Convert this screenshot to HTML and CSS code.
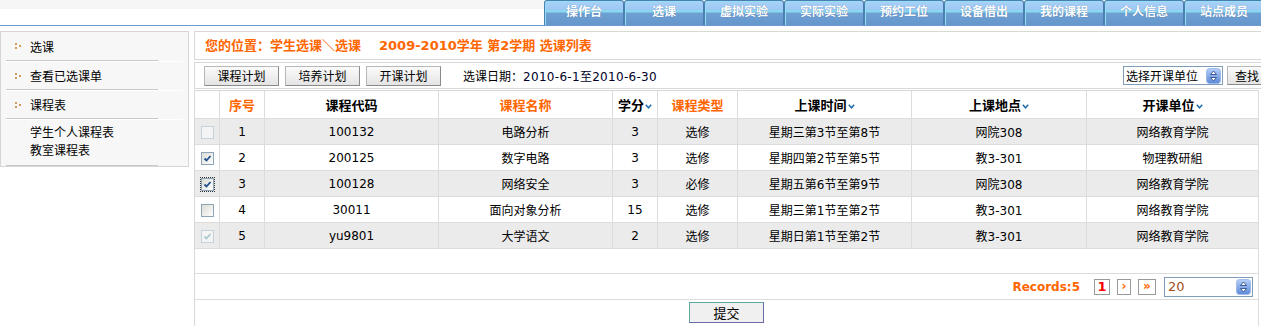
FILE: index.html
```html
<!DOCTYPE html>
<html lang="zh-CN">
<head>
<meta charset="utf-8">
<title>学生选课</title>
<link rel="stylesheet" href="styles.css">
</head>
<body>
<header class="top">
  <div class="brand"></div>
  <nav class="tabs">
    <a class="tab">操作台</a>
    <a class="tab">选课</a>
    <a class="tab">虚拟实验</a>
    <a class="tab">实际实验</a>
    <a class="tab">预约工位</a>
    <a class="tab">设备借出</a>
    <a class="tab">我的课程</a>
    <a class="tab">个人信息</a>
    <a class="tab">站点成员</a>
  </nav>
</header>

<div class="page">
  <aside class="side">
    <div class="item item-first"><svg class="dots" width="6" height="6" viewBox="0 0 6 6"><rect x="0" y="0" width="2" height="2"/><rect x="0" y="4" width="2" height="2"/><rect x="4" y="2" width="2" height="2"/></svg>选课</div>
    <div class="rule"></div>
    <div class="item"><svg class="dots" width="6" height="6" viewBox="0 0 6 6"><rect x="0" y="0" width="2" height="2"/><rect x="0" y="4" width="2" height="2"/><rect x="4" y="2" width="2" height="2"/></svg>查看已选课单</div>
    <div class="rule"></div>
    <div class="item"><svg class="dots" width="6" height="6" viewBox="0 0 6 6"><rect x="0" y="0" width="2" height="2"/><rect x="0" y="4" width="2" height="2"/><rect x="4" y="2" width="2" height="2"/></svg>课程表</div>
    <div class="rule"></div>
    <div class="sub">
      <div>学生个人课程表</div>
      <div>教室课程表</div>
    </div>
    <div class="rule rule-last"></div>
  </aside>

  <main class="main">
    <div class="crumb">您的位置：学生选课＼选课<span class="term">2009-2010学年 第2学期 选课列表</span></div>

    <div class="toolbar">
      <button class="btn">课程计划</button>
      <button class="btn">培养计划</button>
      <button class="btn">开课计划</button>
      <span class="date">选课日期：<span class="date-val">2010-6-1至2010-6-30</span></span>
      <div class="tools">
        <div class="sel sel-unit"><span>选择开课单位</span>
          <svg class="spin" width="15" height="16" viewBox="0 0 15 16"><defs><linearGradient id="sg1" x1="0" y1="0" x2="0" y2="1"><stop offset="0" stop-color="#b4cff8"/><stop offset="1" stop-color="#5d89d8"/></linearGradient></defs><rect x="0.5" y="0.5" width="14" height="15" rx="3" fill="url(#sg1)" stroke="#9fbbea"/><path d="M4.5 6.5 L7.5 3 L10.5 6.5 Z M4.5 9.5 L7.5 13 L10.5 9.5 Z" fill="#fff" stroke="#2f4f8c" stroke-width="0.9"/></svg>
        </div>
        <button class="btn btn-find">查找</button>
      </div>
    </div>

    <table class="grid">
      <colgroup>
        <col class="c-chk"><col class="c-no"><col class="c-code"><col class="c-name"><col class="c-credit"><col class="c-type"><col class="c-time"><col class="c-place"><col class="c-unit">
      </colgroup>
      <thead>
        <tr>
          <th></th>
          <th class="hl">序号</th>
          <th>课程代码</th>
          <th class="hl">课程名称</th>
          <th>学分<svg class="chev" width="7" height="5" viewBox="0 0 7 5"><polyline points="0.8,0.8 3.5,3.8 6.2,0.8"/></svg></th>
          <th class="hl">课程类型</th>
          <th>上课时间<svg class="chev" width="7" height="5" viewBox="0 0 7 5"><polyline points="0.8,0.8 3.5,3.8 6.2,0.8"/></svg></th>
          <th>上课地点<svg class="chev" width="7" height="5" viewBox="0 0 7 5"><polyline points="0.8,0.8 3.5,3.8 6.2,0.8"/></svg></th>
          <th>开课单位<svg class="chev" width="7" height="5" viewBox="0 0 7 5"><polyline points="0.8,0.8 3.5,3.8 6.2,0.8"/></svg></th>
        </tr>
      </thead>
      <tbody>
        <tr class="odd">
          <td><span class="cb cb-dis"></span></td>
          <td>1</td><td>100132</td><td>电路分析</td><td>3</td><td>选修</td><td>星期三第3节至第8节</td><td>网院308</td><td>网络教育学院</td>
        </tr>
        <tr>
          <td><span class="cb"><svg width="11" height="11" viewBox="0 0 11 11"><path class="ck" d="M2.5 5.5 L4.5 7.5 L8.5 3"/></svg></span></td>
          <td>2</td><td>200125</td><td>数字电路</td><td>3</td><td>选修</td><td>星期四第2节至第5节</td><td>教3-301</td><td>物理教研組</td>
        </tr>
        <tr class="odd">
          <td><span class="cb cb-focus"><svg width="11" height="11" viewBox="0 0 11 11"><path class="ck" d="M2.5 5.5 L4.5 7.5 L8.5 3"/></svg></span></td>
          <td>3</td><td>100128</td><td>网络安全</td><td>3</td><td>必修</td><td>星期五第6节至第9节</td><td>网院308</td><td>网络教育学院</td>
        </tr>
        <tr>
          <td><span class="cb"></span></td>
          <td>4</td><td>30011</td><td>面向对象分析</td><td>15</td><td>选修</td><td>星期三第1节至第2节</td><td>教3-301</td><td>网络教育学院</td>
        </tr>
        <tr class="odd">
          <td><span class="cb cb-dis"><svg width="11" height="11" viewBox="0 0 11 11"><path class="ck ck-dis" d="M2.5 5.5 L4.5 7.5 L8.5 3"/></svg></span></td>
          <td>5</td><td>yu9801</td><td>大学语文</td><td>2</td><td>选修</td><td>星期日第1节至第2节</td><td>教3-301</td><td>网络教育学院</td>
        </tr>
      </tbody>
      <tfoot>
        <tr class="blank"><td colspan="9"></td></tr>
        <tr class="pager-row">
          <td colspan="9">
            <div class="pager">
              <span class="rec">Records:5</span>
              <span class="pg pg-cur">1</span>
              <span class="pg pg-next">›</span>
              <span class="pg pg-last">»</span>
              <div class="sel sel-size"><span>20</span>
                <svg class="spin" width="15" height="16" viewBox="0 0 15 16"><defs><linearGradient id="sg2" x1="0" y1="0" x2="0" y2="1"><stop offset="0" stop-color="#b4cff8"/><stop offset="1" stop-color="#5d89d8"/></linearGradient></defs><rect x="0.5" y="0.5" width="14" height="15" rx="3" fill="url(#sg2)" stroke="#9fbbea"/><path d="M4.5 6.5 L7.5 3 L10.5 6.5 Z M4.5 9.5 L7.5 13 L10.5 9.5 Z" fill="#fff" stroke="#2f4f8c" stroke-width="0.9"/></svg>
              </div>
            </div>
          </td>
        </tr>
        <tr class="submit-row">
          <td colspan="9"><button class="submit">提交</button></td>
        </tr>
      </tfoot>
    </table>
  </main>
</div>
</body>
</html>
```

FILE: styles.css
```css
* { box-sizing: border-box; }
html, body { margin: 0; overflow: hidden; }
body {
  width: 1300px;
  font: 12px "DejaVu Sans", "Noto Sans CJK SC", sans-serif;
  color: #000;
  background: #fff;
}

/* ---------- top navigation ---------- */
.top {
  display: flex;
  height: 26px;
  border-bottom: 1px solid #6c9bd0;
  background: linear-gradient(#f6f6f6 0, #f6f6f6 9px, #fff 9px);
}
.brand { flex: 0 0 544px; }
.tabs { display: flex; }
.tab {
  flex: 0 0 80px;
  height: 25px;
  border: 1px solid #4f7db2;
  border-bottom: 0;
  border-radius: 3px 3px 0 0;
  background: linear-gradient(#a9d1f8 0, #9bc8f3 9px, #86dcee 10px, #86dcee 11px, #6fa0d4 12px, #6697cc 100%);
  box-shadow: inset 1px 1px 0 #8fe2f2;
  color: #fff;
  font-weight: bold;
  font-size: 12px;
  line-height: 22px;
  text-align: center;
  text-decoration: none;
  text-shadow: 0 0 1px rgba(30, 60, 110, 0.5);
}

/* ---------- layout ---------- */
.page {
  display: flex;
  align-items: flex-start;
  gap: 5px;
  padding-top: 5px;
}

/* ---------- sidebar ---------- */
.side {
  flex: 0 0 189px;
  border: 1px solid #d6d6d6;
  background: #f7f7f7;
}
.item {
  display: flex;
  align-items: center;
  height: 27px;
  padding-left: 14px;
}
.item-first { height: 28px; }
.dots { margin-right: 9px; fill: #cf9b5c; }
.rule {
  height: 2px;
  margin: 0 5px;
  background:
    linear-gradient(#c9c9c9, #c9c9c9) 0 0 / 152px 1px no-repeat,
    linear-gradient(#fff, #fff) 0 1px / 178px 1px no-repeat;
}
.rule-last { height: 1px; }
.sub {
  padding: 4px 0 5px 29px;
  line-height: 18px;
}

/* ---------- main ---------- */
.main { flex: 0 0 1080px; }
.crumb {
  height: 29px;
  border: 1px solid #d8d8d8;
  padding-left: 10px;
  line-height: 27px;
  color: #ff6600;
  font-weight: bold;
  font-size: 13px;
}
.term { margin-left: 18px; }

.toolbar {
  display: flex;
  align-items: center;
  height: 27px;
  margin-top: 2px;
  border: 1px solid #d8d8d8;
  padding: 0 6px 0 9px;
}
.btn {
  width: 75px;
  height: 20px;
  margin: 0 6px 0 0;
  padding: 0;
  border: 1px solid;
  border-color: #b8b8b8 #8a8a8a #8a8a8a #b8b8b8;
  background: linear-gradient(#fbfbfb, #e4e4e4);
  font: 12px "DejaVu Sans", "Noto Sans CJK SC", sans-serif;
  color: #000;
}
.date { margin-left: 16px; }
.date-val { color: #00002a; letter-spacing: 0.3px; }
.tools {
  display: flex;
  align-items: center;
  gap: 4px;
  margin-left: auto;
}
.btn-find { width: 40px; height: 19px; margin: 0; }

.sel {
  display: flex;
  align-items: center;
  justify-content: space-between;
  border: 1px solid #7f9db9;
  background: #fff;
  padding: 0 1px 0 2px;
}
.sel-unit { width: 100px; height: 19px; }
.spin { display: block; }

/* ---------- grid ---------- */
.grid {
  width: 1065px;
  table-layout: fixed;
  border-collapse: separate;
  border-spacing: 0;
  border-top: 1px solid #d8d8d8;
  border-left: 1px solid #d8d8d8;
  margin-top: 1px;
}
.c-chk { width: 25px; }
.c-no { width: 45px; }
.c-code { width: 174px; }
.c-name { width: 174px; }
.c-credit { width: 45px; }
.c-type { width: 80px; }
.c-time { width: 174px; }
.c-place { width: 175px; }
.c-unit { width: 172px; }

.grid th, .grid td {
  height: 26px;
  padding: 0;
  border-right: 1px solid #dcdcdc;
  border-bottom: 1px solid #dcdcdc;
  text-align: center;
  vertical-align: middle;
  font-weight: normal;
  white-space: nowrap;
}
.grid thead th {
  height: 28px;
  font-size: 13px;
  font-weight: bold;
}
.grid thead th.hl { color: #ff6600; }
.chev {
  margin-left: 1px;
  vertical-align: middle;
  fill: none;
  stroke: #1f6db0;
  stroke-width: 1.5;
}
.grid tbody tr.odd td { background: #ebebeb; }

.cb {
  display: inline-block;
  width: 13px;
  height: 13px;
  border: 1px solid #8ea5b7;
  background: linear-gradient(135deg, #dcdcd6, #fdfdfd);
  vertical-align: middle;
}
.cb svg { display: block; }
.cb-dis { border-color: #c7d2d8; background: #f4f4f4; }
.cb-focus { outline: 1px dotted #333; }
.ck { fill: none; stroke: #21508f; stroke-width: 1.8; }
.ck-dis { stroke: #a9cad0; }

.grid tfoot tr.blank td { height: 25px; }
.grid tfoot tr.pager-row td { height: 26px; }
.pager {
  display: flex;
  align-items: center;
  justify-content: flex-end;
  padding-right: 5px;
}
.rec {
  color: #ff6600;
  font-weight: bold;
  margin-right: 14px;
}
.pg {
  display: inline-block;
  height: 16px;
  border: 1px solid #9a9a9a;
  margin-right: 7px;
  line-height: 13px;
  text-align: center;
  color: #ff6600;
  font-weight: bold;
}
.pg-cur { width: 16px; color: #ff0000; font-size: 13px; line-height: 14px; }
.pg-next { width: 14px; }
.pg-last { width: 18px; }
.sel-size {
  width: 89px;
  height: 20px;
  margin-left: 1px;
  padding-left: 3px;
  font-size: 13px;
  color: #a0501c;
}

.grid tfoot tr.submit-row td {
  height: 30px;
  border-bottom: 0;
  vertical-align: top;
  padding-top: 2px;
}
.submit {
  width: 75px;
  height: 21px;
  padding: 0;
  border: 1px solid;
  border-color: #5fa5a1 #6b6ba8 #6b6ba8 #5fa5a1;
  background: #f0f0f0;
  font: 13px "DejaVu Sans", "Noto Sans CJK SC", sans-serif;
  color: #000;
}
```
